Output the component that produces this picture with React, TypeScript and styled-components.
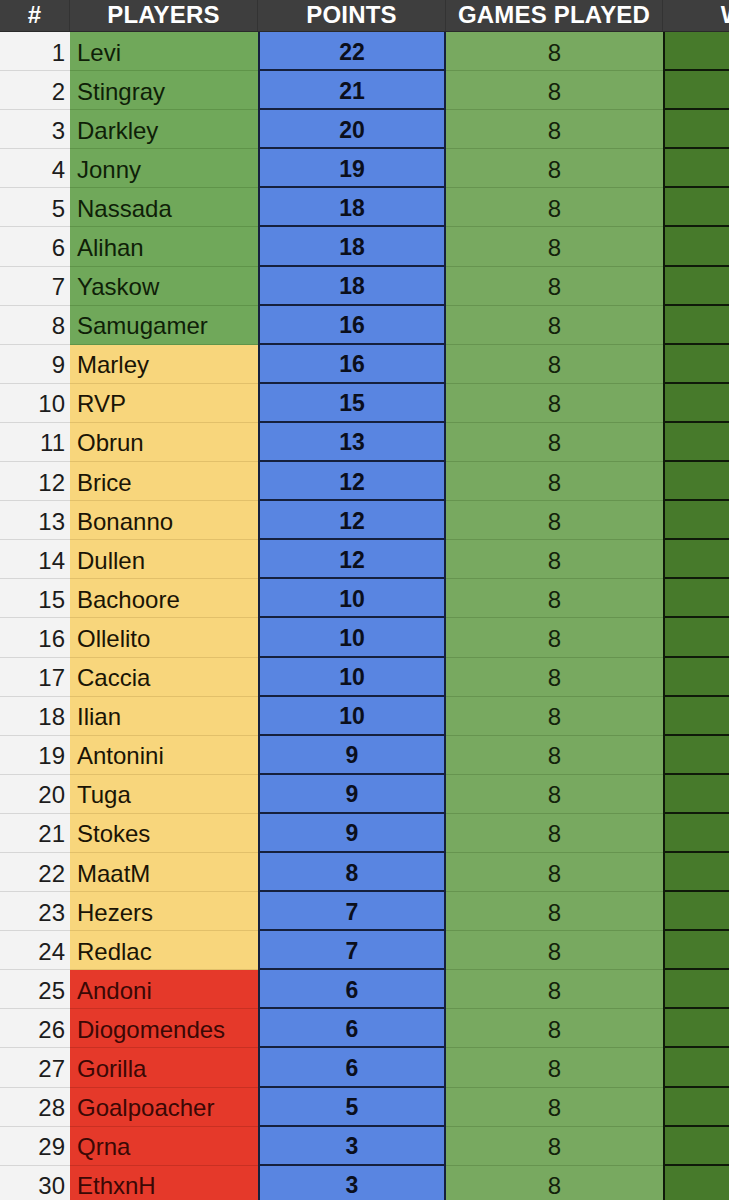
import React from 'react';
import styled, { createGlobalStyle } from 'styled-components';

const GlobalStyle = createGlobalStyle`
    html, body {
        margin: 0;
        padding: 0;
        background: #ffffff;
        overflow: hidden;
    }
    body {
        font-family: "Liberation Sans", Arial, sans-serif;
    }
`;

type Tier = 'top' | 'mid' | 'low';

const players: [string, number][] = [
    ['Levi', 22],
    ['Stingray', 21],
    ['Darkley', 20],
    ['Jonny', 19],
    ['Nassada', 18],
    ['Alihan', 18],
    ['Yaskow', 18],
    ['Samugamer', 16],
    ['Marley', 16],
    ['RVP', 15],
    ['Obrun', 13],
    ['Brice', 12],
    ['Bonanno', 12],
    ['Dullen', 12],
    ['Bachoore', 10],
    ['Ollelito', 10],
    ['Caccia', 10],
    ['Ilian', 10],
    ['Antonini', 9],
    ['Tuga', 9],
    ['Stokes', 9],
    ['MaatM', 8],
    ['Hezers', 7],
    ['Redlac', 7],
    ['Andoni', 6],
    ['Diogomendes', 6],
    ['Gorilla', 6],
    ['Goalpoacher', 5],
    ['Qrna', 3],
    ['EthxnH', 3],
];

const tierColors: Record<Tier, { bg: string; line: string; text: string }> = {
    top: { bg: '#70a85a', line: '#5f9449', text: '#0f1f08' },
    mid: { bg: '#f8d67c', line: '#e2c06a', text: '#1a1405' },
    low: { bg: '#e5392a', line: '#c93022', text: '#3a0805' },
};

const COLUMNS = '70px 188px 188px 217px 180px';

const Sheet = styled.div`
    width: 843px;
    display: flex;
    flex-direction: column;
`;

const HeaderRow = styled.div`
    display: grid;
    grid-template-columns: ${COLUMNS};
    height: 32px;
    background: #3e3e3e;
    border-bottom: 1px solid #2a2a2a;
    box-sizing: border-box;
`;

const HeaderCell = styled.div`
    display: flex;
    align-items: center;
    justify-content: center;
    color: #ffffff;
    font-weight: bold;
    font-size: 24px;
    letter-spacing: 0.2px;
    border-right: 1px solid #333333;
    padding-bottom: 2px;
`;

const Row = styled.div`
    display: grid;
    grid-template-columns: ${COLUMNS};
    height: 39.1px;
`;

const RankCell = styled.div`
    display: flex;
    align-items: center;
    justify-content: flex-end;
    padding: 3px 5px 0 0;
    background: #f3f3f3;
    border-bottom: 1px solid #d6d6d6;
    color: #1c1c1c;
    font-size: 24px;
`;

const NameCell = styled.div<{ $tier: Tier }>`
    display: flex;
    align-items: center;
    padding: 3px 0 0 7px;
    background: ${p => tierColors[p.$tier].bg};
    border-bottom: 1px solid ${p => tierColors[p.$tier].line};
    color: ${p => tierColors[p.$tier].text};
    font-size: 24px;
`;

const PointsCell = styled.div`
    display: flex;
    align-items: center;
    justify-content: center;
    padding-top: 3px;
    background: #5985e1;
    border-left: 2px solid #15203d;
    border-right: 2px solid #15203d;
    border-bottom: 2px solid #15203d;
    color: #0b0f1c;
    font-weight: bold;
    font-size: 23px;
`;

const GamesCell = styled.div`
    display: flex;
    align-items: center;
    justify-content: center;
    padding-top: 3px;
    background: #78a960;
    border-bottom: 1px solid #66944f;
    color: #13220b;
    font-size: 24px;
`;

const WinsCell = styled.div`
    background: #477a2b;
    border-left: 2px solid #0f1a09;
    border-bottom: 2px solid #0f1a09;
`;

const tierOf = (rank: number): Tier => (rank <= 8 ? 'top' : rank <= 24 ? 'mid' : 'low');

const App = () => {
    return (
        <>
            <GlobalStyle />
            <Sheet>
                <HeaderRow>
                    <HeaderCell>#</HeaderCell>
                    <HeaderCell>PLAYERS</HeaderCell>
                    <HeaderCell>POINTS</HeaderCell>
                    <HeaderCell>GAMES PLAYED</HeaderCell>
                    <HeaderCell>WINS</HeaderCell>
                </HeaderRow>
                {players.map(([name, points], i) => (
                    <Row key={name}>
                        <RankCell>{i + 1}</RankCell>
                        <NameCell $tier={tierOf(i + 1)}>{name}</NameCell>
                        <PointsCell>{points}</PointsCell>
                        <GamesCell>8</GamesCell>
                        <WinsCell />
                    </Row>
                ))}
            </Sheet>
        </>
    );
};

export default App;
